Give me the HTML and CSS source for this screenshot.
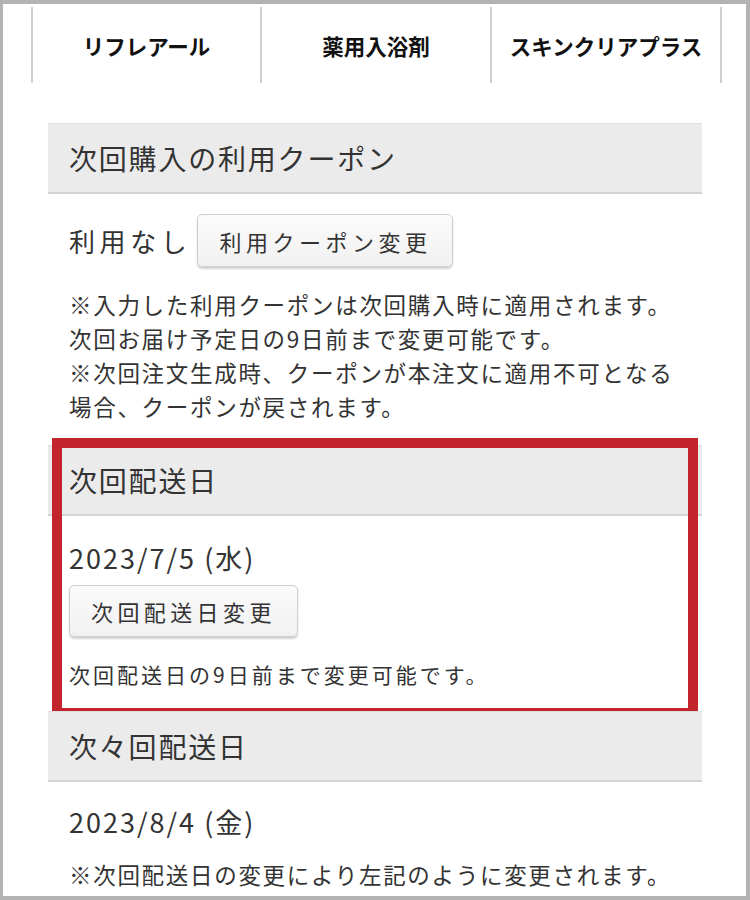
FILE: index.html
```html
<!DOCTYPE html>
<html lang="ja">
<head>
  <meta charset="UTF-8" />
  <meta name="viewport" content="width=device-width, initial-scale=1.0" />
  <title>定期購入の変更</title>
  <link rel="stylesheet" href="styles.css">
</head>
<body>
  <div class="frame">
    <nav class="tabs">
      <div class="tab">リフレアール</div>
      <div class="tab">薬用入浴剤</div>
      <div class="tab">スキンクリアプラス</div>
    </nav>

    <div class="content">
      <section class="block">
        <h2 class="block-title">次回購入の利用クーポン</h2>
        <div class="block-body coupon-body">
          <div class="value-row">
            <span class="value">利用なし</span>
            <button class="btn">利用クーポン変更</button>
          </div>
          <p class="note">※入力した利用クーポンは次回購入時に適用されます。<br>次回お届け予定日の9日前まで変更可能です。<br>※次回注文生成時、クーポンが本注文に適用不可となる<br>場合、クーポンが戻されます。</p>
        </div>
      </section>

      <section class="block highlighted">
        <h2 class="block-title">次回配送日</h2>
        <div class="block-body next-body">
          <div class="date">2023/7/5 (水)</div>
          <button class="btn">次回配送日変更</button>
          <p class="note">次回配送日の9日前まで変更可能です。</p>
        </div>
        <div class="red-mark"></div>
      </section>

      <section class="block">
        <h2 class="block-title">次々回配送日</h2>
        <div class="block-body after-body">
          <div class="date">2023/8/4 (金)</div>
          <p class="note">※次回配送日の変更により左記のように変更されます。</p>
        </div>
      </section>
    </div>
  </div>
</body>
</html>
```

FILE: styles.css
```css
* {
  margin: 0;
  padding: 0;
  box-sizing: border-box;
}
body {
  background-color: #fff;
  font-family: "Noto Sans CJK JP", "Noto Sans", sans-serif;
  color: #333;
}
.frame {
  width: 750px;
  height: 900px;
  border: 4px solid #b3b3b3;
  border-left-width: 3px;
  overflow: hidden;
  background-color: #fff;
}

/* tabs */
.tabs {
  display: flex;
  margin: 3px 0 0 28px;
}
.tab {
  width: 230px;
  height: 76px;
  border-left: 2px solid #d0d0d0;
  display: flex;
  align-items: center;
  justify-content: center;
  font-size: 21.5px;
  font-weight: bold;
  color: #111;
}
.tab:first-child {
  width: 229px;
}
.tab:last-child {
  width: 232px;
  border-right: 2px solid #d0d0d0;
}

/* sections */
.content {
  width: 654px;
  margin: 40px 0 0 45px;
}
.block {
  position: relative;
}
.block-title {
  height: 71px;
  padding-left: 21px;
  display: flex;
  align-items: center;
  background-color: #ebebeb;
  border-top: 1px solid #dedede;
  border-bottom: 2px solid #d3d3d3;
  font-size: 28px;
  font-weight: normal;
  letter-spacing: 1.8px;
  color: #333;
}
.block-body {
  padding: 20px 21px 22px;
}
.value-row {
  display: flex;
  align-items: center;
  gap: 6px;
}
.value {
  font-size: 26px;
  letter-spacing: 4.6px;
}
.date {
  font-size: 27px;
  line-height: 40px;
  letter-spacing: 2px;
}
.btn {
  font-family: inherit;
  font-size: 22px;
  letter-spacing: 4.5px;
  color: #333;
  height: 53px;
  padding: 0 21px 0 21px;
  background: linear-gradient(#fbfbfb, #f1f1f1);
  border: 1px solid #cfcfcf;
  border-radius: 5px;
  box-shadow: 0 2px 2px rgba(0, 0, 0, 0.18);
}
.note {
  font-size: 22.5px;
  line-height: 34px;
  letter-spacing: 1.7px;
  margin-top: 20px;
}

.next-body {
  padding: 22px 21px 20px;
}
.next-body .btn {
  height: 52px;
  margin-top: 7px;
  letter-spacing: 4.4px;
}
.next-body .note {
  font-size: 21px;
  letter-spacing: 3px;
  margin-top: 20px;
}
.after-body {
  padding: 20px 21px 0;
}
.after-body .note {
  margin-top: 15px;
}

/* annotation frame drawn over the highlighted block */
.red-mark {
  position: absolute;
  top: -7px;
  bottom: -7px;
  left: 4px;
  right: 4px;
  border: 10px solid #c3252c;
  pointer-events: none;
}
```
